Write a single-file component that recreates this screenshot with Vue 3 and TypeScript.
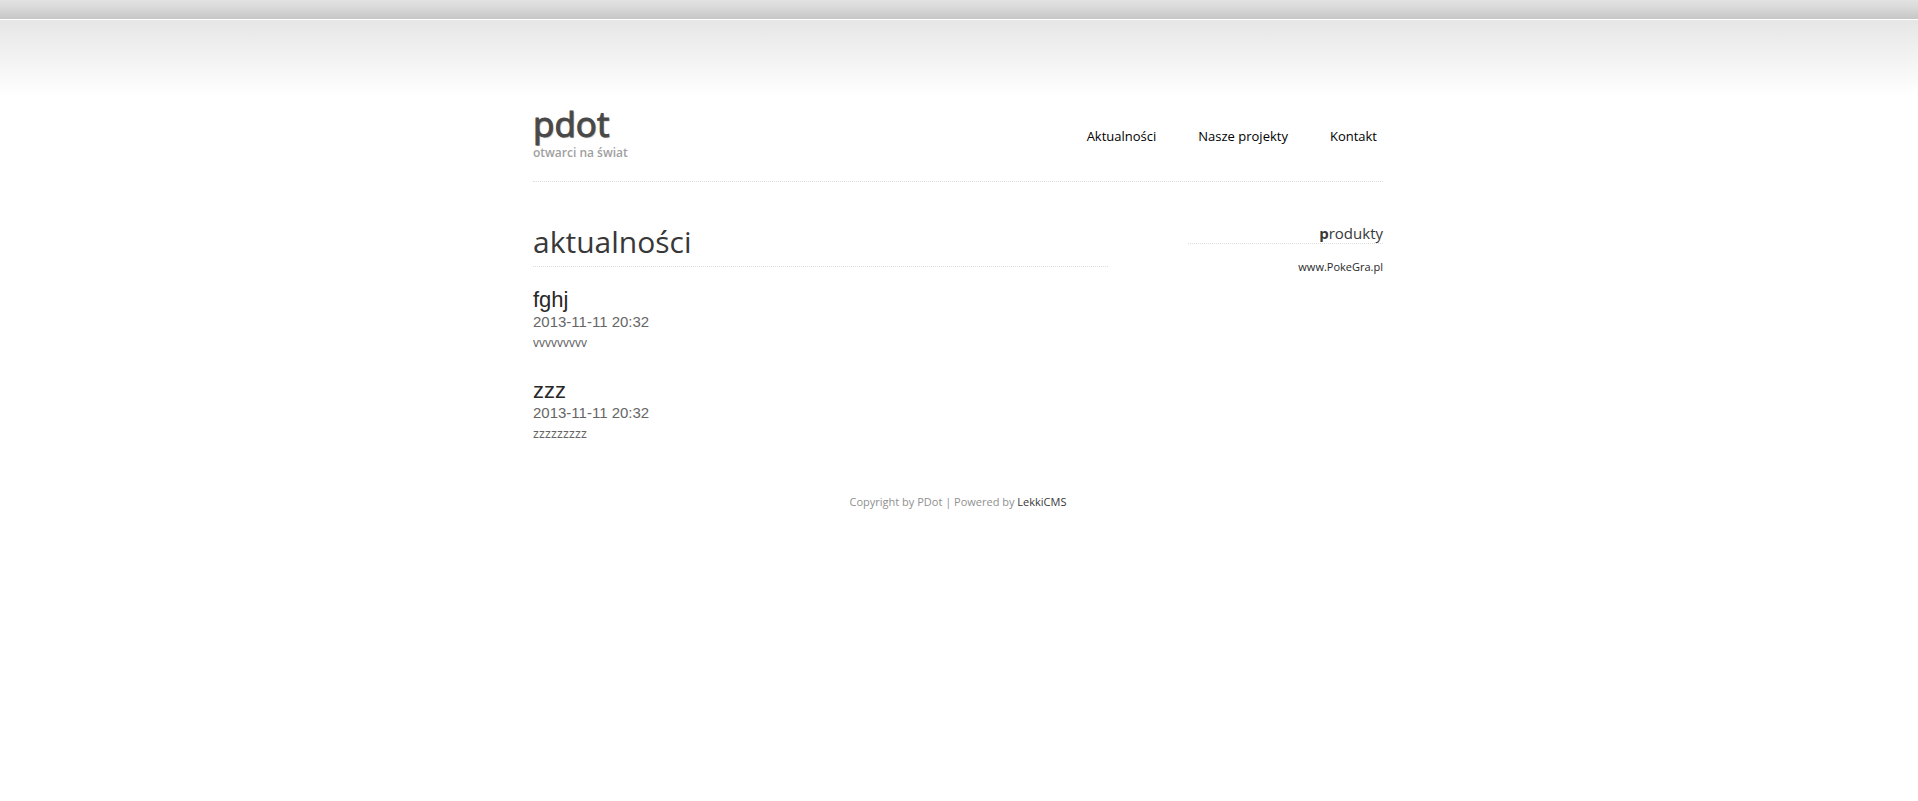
<script setup lang="ts">
interface NavLink { label: string; href: string }
interface Post { title: string; date: string; body: string }

const nav: NavLink[] = [
  { label: 'Aktualności', href: '#aktualnosci' },
  { label: 'Nasze projekty', href: '#projekty' },
  { label: 'Kontakt', href: '#kontakt' },
]

const posts: Post[] = [
  { title: 'fghj', date: '2013-11-11 20:32', body: 'vvvvvvvvv' },
  { title: 'zzz', date: '2013-11-11 20:32', body: 'zzzzzzzzz' },
]
</script>

<template>
  <div class="page">
    <div class="strip"></div>
    <div class="shade">
      <div class="wrap">
        <header class="header">
          <div class="brand">
            <h1 class="logo">pdot</h1>
            <p class="slogan">otwarci na świat</p>
          </div>
          <nav class="nav">
            <a v-for="item in nav" :key="item.href" :href="item.href">{{ item.label }}</a>
          </nav>
        </header>

        <div class="columns">
          <main class="main">
            <h2 id="aktualnosci" class="title">aktualności</h2>
            <article v-for="post in posts" :key="post.title" class="post">
              <h3>{{ post.title }}</h3>
              <time>{{ post.date }}</time>
              <p>{{ post.body }}</p>
            </article>
          </main>
          <aside class="side">
            <h4><b>p</b>rodukty</h4>
            <a href="#pokegra">www.PokeGra.pl</a>
          </aside>
        </div>

        <footer class="footer">
          Copyright by PDot | Powered by <a href="#lekkicms">LekkiCMS</a>
        </footer>
      </div>
    </div>
  </div>
</template>

<style>
body {
  margin: 0;
  background: #fff;
}
</style>

<style scoped>
.page {
  font-family: "Trebuchet MS", "Open Sans", sans-serif;
  color: #666;
}
h1, h2, h3, h4, p {
  margin: 0;
  font-weight: 400;
}
a {
  text-decoration: none;
}
.strip {
  height: 19px;
  background: linear-gradient(#e2e2e2, #dcdcdc 30%, #c6c6c6);
  border-bottom: 1px solid #fff;
}
.shade {
  background: linear-gradient(#e6e6e6, #fff 76px);
}
.wrap {
  max-width: 850px;
  margin: 0 auto;
  padding: 84px 2px 24px 0;
}
.header {
  display: flex;
  justify-content: space-between;
  align-items: flex-start;
  height: 77px;
  border-bottom: 1px dotted #ddd;
}
.logo {
  font-size: 35px;
  line-height: 40px;
  padding-bottom: 2px;
  color: #484848;
  text-shadow: 1px 1px 1px #aaa;
  -webkit-text-stroke: 1px #484848;
}
.slogan {
  font-size: 12px;
  line-height: 14px;
  font-weight: 600;
  color: #a0a0a0;
}
.nav {
  display: flex;
  gap: 42px;
  padding: 22px 6px 0 0;
  font-size: 13px;
  line-height: 20px;
}
.nav a {
  color: #000;
}
.columns {
  display: flex;
  justify-content: space-between;
  align-items: flex-start;
}
.main {
  width: 575px;
  padding-top: 40px;
}
.title {
  font-size: 30px;
  line-height: 40px;
  padding-bottom: 4px;
  color: #383838;
  border-bottom: 1px dotted #ddd;
  margin-bottom: 20px;
}
.post {
  font-family: "Liberation Sans", Arial, sans-serif;
  margin-bottom: 23px;
}
.post h3 {
  font-size: 22px;
  line-height: 26px;
  color: #282828;
}
.post time {
  display: block;
  font-size: 15px;
  line-height: 18px;
}
.post p {
  font-size: 12px;
  line-height: 24px;
}
.side {
  width: 195px;
  padding-top: 41px;
  text-align: right;
}
.side h4 {
  font-size: 15px;
  line-height: 20px;
  color: #383838;
  border-bottom: 1px dotted #ddd;
  margin-bottom: 13px;
}
.side a {
  display: block;
  font-size: 11px;
  line-height: 20px;
  color: #282828;
}
.footer {
  padding-top: 23px;
  text-align: center;
  font-size: 11px;
  line-height: 20px;
  color: #909090;
}
.footer a {
  color: #383838;
}
</style>
